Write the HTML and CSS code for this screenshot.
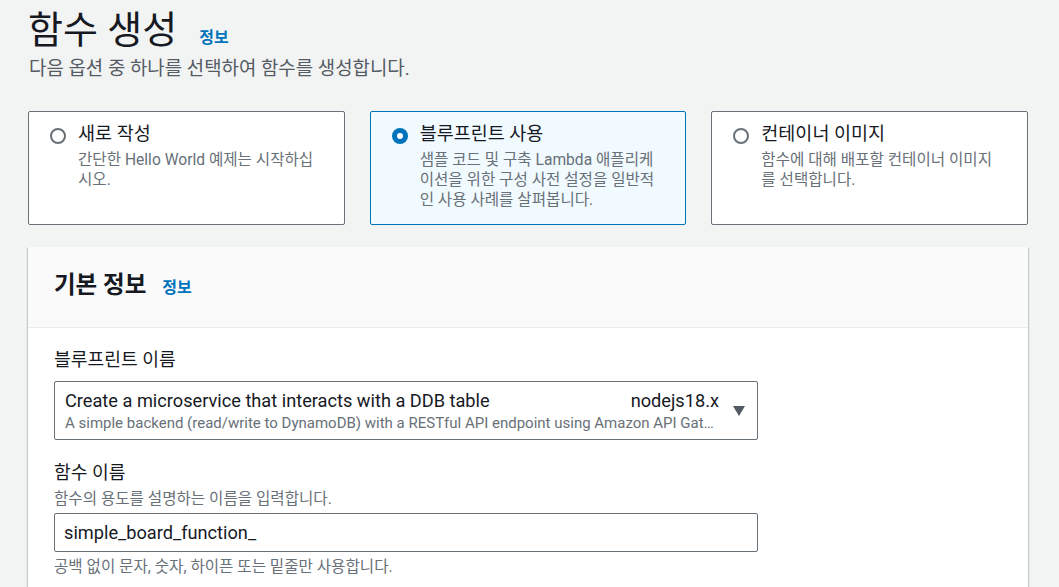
FILE: index.html
```html
<!DOCTYPE html>
<html>

<head>
    <meta charset="utf-8">
    <title>함수 생성</title>
    <link rel="stylesheet" href="styles.css">
</head>

<body>
    <div class="page">
        <header class="page-head">
            <h1>함수 생성</h1>
            <a class="info" href="#">정보</a>
        </header>
        <p class="page-desc">다음 옵션 중 하나를 선택하여 함수를 생성합니다.</p>

        <div class="tiles">
            <label class="tile">
                <span class="radio"></span>
                <span class="tile-text">
                    <span class="tile-title">새로 작성</span>
                    <span class="tile-desc">간단한 Hello World 예제는 시작하십시오.</span>
                </span>
            </label>
            <label class="tile selected">
                <span class="radio"></span>
                <span class="tile-text">
                    <span class="tile-title">블루프린트 사용</span>
                    <span class="tile-desc">샘플 코드 및 구축 Lambda 애플리케이션을 위한 구성 사전 설정을 일반적인 사용 사례를 살펴봅니다.</span>
                </span>
            </label>
            <label class="tile">
                <span class="radio"></span>
                <span class="tile-text">
                    <span class="tile-title">컨테이너 이미지</span>
                    <span class="tile-desc">함수에 대해 배포할 컨테이너 이미지를 선택합니다.</span>
                </span>
            </label>
        </div>

        <section class="panel">
            <div class="panel-head">
                <h2>기본 정보</h2>
                <a class="info" href="#">정보</a>
            </div>
            <div class="panel-body">
                <div class="field">
                    <div class="field-label">블루프린트 이름</div>
                    <div class="select">
                        <div class="select-main">
                            <div class="select-row">
                                <span class="select-name">Create a microservice that interacts with a DDB table</span>
                                <span class="select-tag">nodejs18.x</span>
                            </div>
                            <div class="select-desc">A simple backend (read/write to DynamoDB) with a RESTful API endpoint using Amazon API Gateway.</div>
                        </div>
                        <span class="caret"></span>
                    </div>
                </div>

                <div class="field">
                    <div class="field-label">함수 이름</div>
                    <div class="field-desc">함수의 용도를 설명하는 이름을 입력합니다.</div>
                    <input class="text-input" type="text" value="simple_board_function_">
                    <div class="field-hint">공백 없이 문자, 숫자, 하이픈 또는 밑줄만 사용합니다.</div>
                </div>
            </div>
        </section>
    </div>
</body>

</html>
```

FILE: styles.css
```css
body {
    margin: 0;
    background-color: #f2f3f3;
    color: #16191f;
    font-family: Roboto, "Noto Sans CJK KR", sans-serif;
    overflow: hidden;
}

.page {
    padding: 0 31px 0 28px;
}

.page-head {
    display: flex;
    align-items: baseline;
    gap: 22px;
    padding-top: 7px;
}

h1 {
    margin: 0;
    font-size: 38px;
    font-weight: 400;
    line-height: 46px;
}

.info {
    color: #0073bb;
    font-size: 16px;
    font-weight: 700;
    text-decoration: none;
}

.page-desc {
    margin: 4px 0 0 1px;
    font-size: 18.9px;
    line-height: 24px;
    color: #545b64;
}

.tiles {
    display: grid;
    grid-template-columns: 1fr 1fr 1fr;
    gap: 25px;
    width: 1000px;
    margin-top: 30px;
}

.tile {
    display: flex;
    align-items: flex-start;
    gap: 12px;
    height: 114px;
    box-sizing: border-box;
    padding: 9px 24px 10px 21px;
    background-color: white;
    border: 1px solid #687078;
    border-radius: 2px;
}

.tile.selected {
    background-color: #f1faff;
    border-color: #0073bb;
}

.radio {
    flex: none;
    width: 16px;
    height: 16px;
    margin-top: 7px;
    box-sizing: border-box;
    border: 2px solid #687078;
    border-radius: 50%;
}

.selected .radio {
    border: 5px solid #0073bb;
    background-color: white;
}

.tile-text {
    display: flex;
    flex-direction: column;
}

.tile-title {
    font-size: 18.5px;
    line-height: 26px;
}

.tile-desc {
    margin-top: 3px;
    font-size: 15.6px;
    line-height: 20px;
    color: #687078;
}

.panel {
    width: 1000px;
    margin-top: 22px;
    background-color: white;
    box-shadow: 0 1px 1px 0 rgba(0, 28, 36, 0.3), 1px 1px 1px 0 rgba(0, 28, 36, 0.15), -1px 1px 1px 0 rgba(0, 28, 36, 0.15);
}

.panel-head {
    display: flex;
    align-items: baseline;
    gap: 16px;
    height: 81px;
    box-sizing: border-box;
    padding: 22px 26px 0;
    background-color: #fafafa;
    border-bottom: 1px solid #eaeded;
}

h2 {
    margin: 0;
    font-size: 23.5px;
    font-weight: 700;
    line-height: 32px;
}

.panel-body {
    padding: 20px 26px 30px;
}

.field {
    width: 704px;
    margin-bottom: 21px;
}

.field-label {
    font-size: 18.2px;
    line-height: 24px;
    margin-bottom: 9px;
}

.field-desc,
.field-hint {
    font-size: 15.6px;
    line-height: 20px;
    color: #687078;
}

.field-desc {
    margin-top: -5px;
    margin-bottom: 4px;
}

.field-hint {
    margin-top: 5px;
}

.select {
    display: flex;
    align-items: center;
    height: 59px;
    box-sizing: border-box;
    padding: 0 12px 0 10px;
    border: 1px solid #687078;
    border-radius: 2px;
}

.select-main {
    flex: 1;
    min-width: 0;
}

.select-row {
    display: flex;
    justify-content: space-between;
    font-size: 18.2px;
    line-height: 24px;
}

.select-desc {
    font-size: 15px;
    line-height: 20px;
    color: #687078;
    white-space: nowrap;
    overflow: hidden;
    text-overflow: ellipsis;
}

.caret {
    flex: none;
    margin-left: 14px;
    width: 0;
    height: 0;
    border-left: 6px solid transparent;
    border-right: 6px solid transparent;
    border-top: 10px solid #545b64;
}

.text-input {
    display: block;
    width: 100%;
    height: 39px;
    box-sizing: border-box;
    padding: 0 9px;
    border: 1px solid #687078;
    border-radius: 2px;
    font-family: Roboto, "Noto Sans CJK KR", sans-serif;
    font-size: 18.2px;
    color: #16191f;
}
```
